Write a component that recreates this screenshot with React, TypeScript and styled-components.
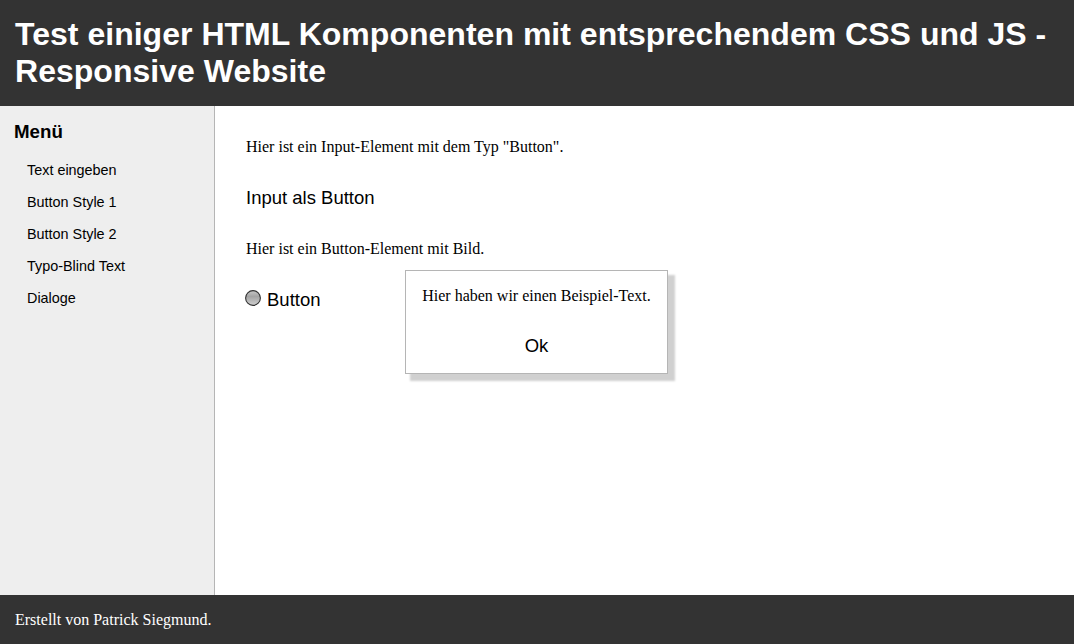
import React from 'react';
import styled, { createGlobalStyle } from 'styled-components';

const sans = '"Liberation Sans", Arial, sans-serif';

const GlobalStyle = createGlobalStyle`
  * { box-sizing: border-box; }
  body { margin: 0; background: #fff; color: #000; font: 16px/18px "Liberation Serif", "Times New Roman", serif; }
`;
const Page = styled.div`
  display: flex;
  flex-direction: column;
  height: 100vh;
  overflow: hidden;
`;
const Header = styled.header`
  height: 106px;
  flex: none;
  padding: 16px 15px;
  background: #333;
  color: #fff;
`;
const Title = styled.h1`
  margin: 0;
  font: bold 32px/37px ${sans};
  letter-spacing: 0.02px;
`;
const Body = styled.div`
  display: flex;
  flex: 1;
`;
const Sidebar = styled.nav`
  width: 215px;
  padding: 15px 14px 0;
  background: #eee;
  border-right: 1px solid #b5b5b5;
`;
const MenuTitle = styled.h2`
  margin: 0 0 11px;
  font: bold 18.72px/22px ${sans};
`;
const MenuItem = styled.a`
  display: block;
  padding-left: 13px;
  font: 14.4px/32px ${sans};
`;
const Main = styled.main`
  flex: 1;
  padding: 32px 31px;
`;
const Text = styled.p`
  margin: 0;
`;
const ActionButton = styled.button`
  display: flex;
  align-items: center;
  gap: 6px;
  margin: 32px 0 33px;
  padding: 0;
  border: 0;
  background: none;
  color: #000;
  font: 18.5px/19px ${sans};
`;
const ConfirmButton = styled(ActionButton)`
  margin-top: 31px;
`;
const Dialog = styled.div`
  position: absolute;
  left: 405px;
  top: 270px;
  width: 263px;
  height: 104px;
  padding: 16px;
  display: flex;
  flex-direction: column;
  align-items: center;
  background: #fff;
  border: 1px solid #b5b5b5;
  box-shadow: 6px 6px 2px 1px #d0d0d0;
  white-space: nowrap;
`;
const Footer = styled.footer`
  height: 49px;
  flex: none;
  padding: 16px 15px;
  background: #333;
  color: #fff;
`;
const Knob = styled.svg`
  margin: -3px 0 0 -1px;
`;

const items = ['Text eingeben', 'Button Style 1', 'Button Style 2', 'Typo-Blind Text', 'Dialoge'];

const RadioIcon = () => (
  <Knob width="16" height="16" viewBox="0 0 16 16">
    <defs>
      <linearGradient id="knob" x1="0" y1="0" x2="0" y2="1">
        <stop offset="0" stopColor="#c8c8c8" />
        <stop offset="0.4" stopColor="#a4a4a4" />
        <stop offset="1" stopColor="#d0d0d0" />
      </linearGradient>
    </defs>
    <circle cx="8" cy="8" r="7.4" fill="url(#knob)" stroke="#333" strokeWidth="1.1" />
  </Knob>
);

export default function App() {
  return (
    <Page>
      <GlobalStyle />
      <Header><Title>Test einiger HTML Komponenten mit entsprechendem CSS und JS - Responsive Website</Title></Header>
      <Body>
        <Sidebar>
          <MenuTitle>Menü</MenuTitle>
          {items.map((item) => <MenuItem key={item}>{item}</MenuItem>)}
        </Sidebar>
        <Main>
          <Text>Hier ist ein Input-Element mit dem Typ "Button".</Text>
          <ActionButton>Input als Button</ActionButton>
          <Text>Hier ist ein Button-Element mit Bild.</Text>
          <ActionButton><RadioIcon />Button</ActionButton>
        </Main>
      </Body>
      <Footer>Erstellt von Patrick Siegmund.</Footer>
      <Dialog role="dialog">
        <Text>Hier haben wir einen Beispiel-Text.</Text>
        <ConfirmButton>Ok</ConfirmButton>
      </Dialog>
    </Page>
  );
}
